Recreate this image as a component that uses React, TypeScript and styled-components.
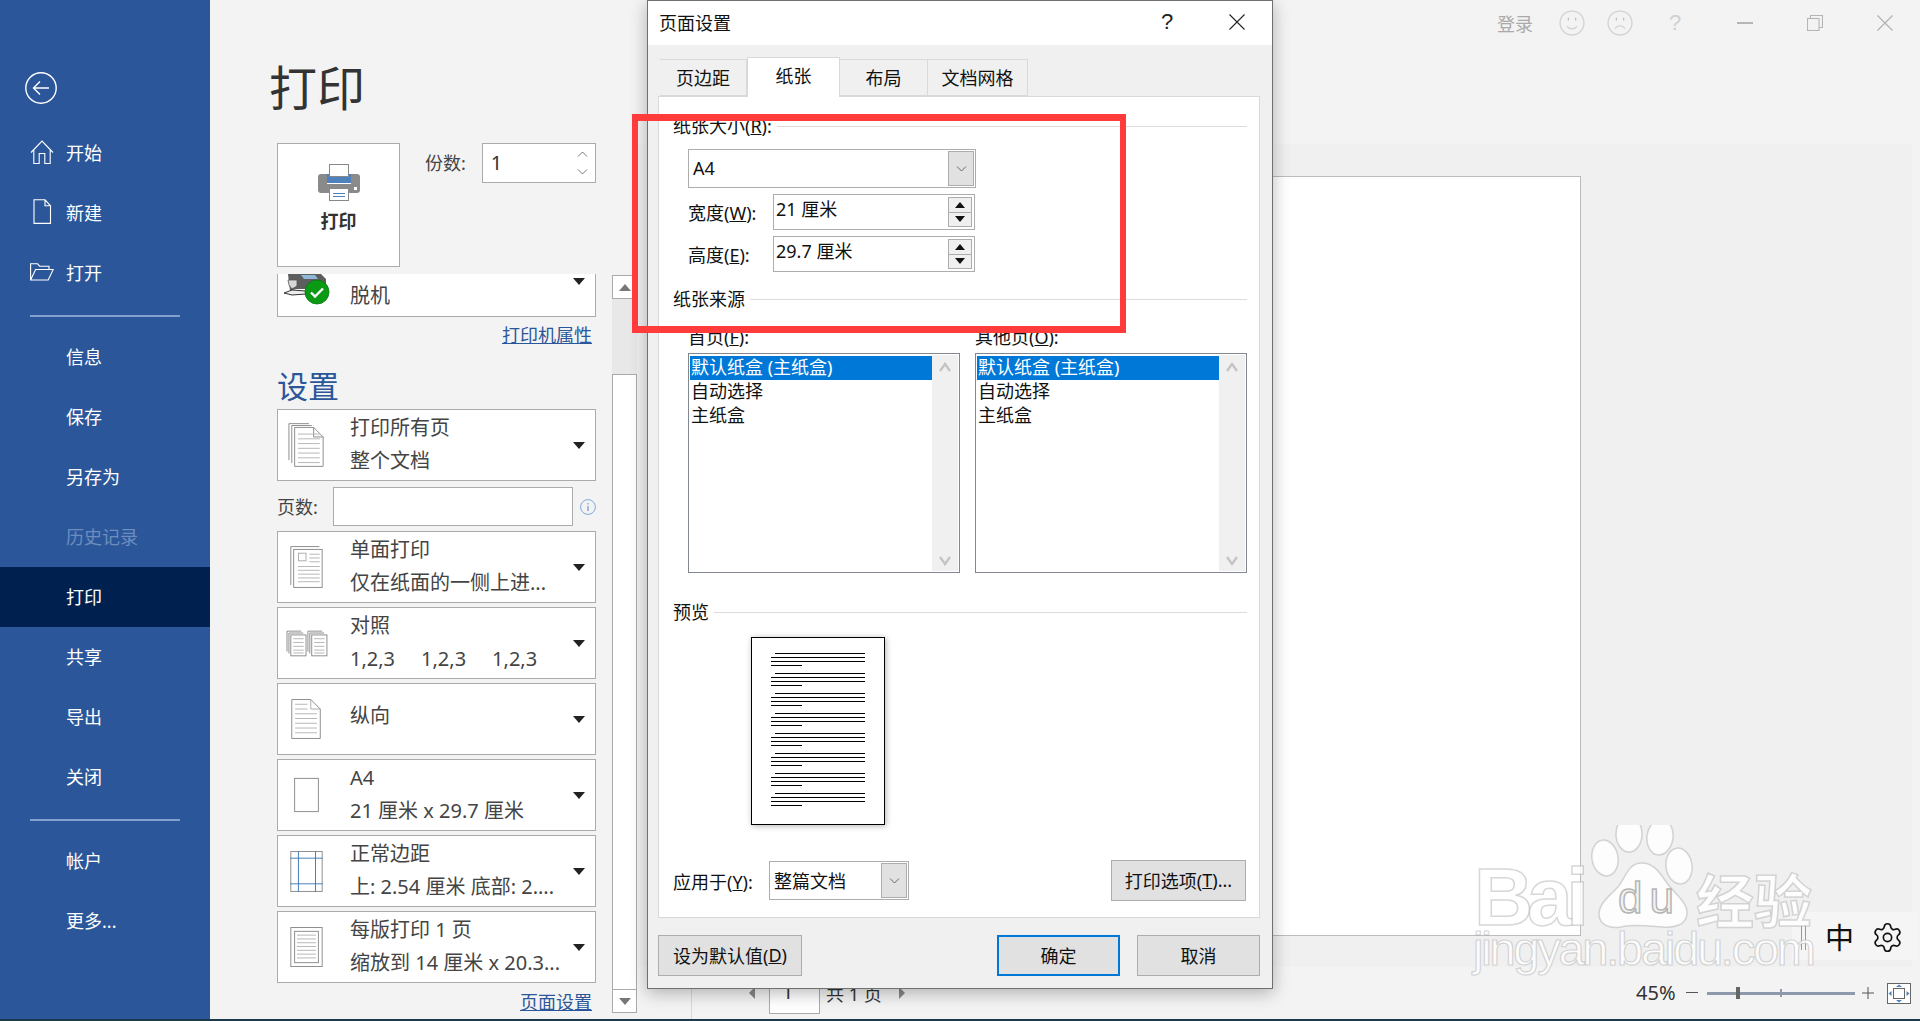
import { ReactNode } from 'react'
import styled, { createGlobalStyle } from 'styled-components'
import { Settings } from 'lucide-react'

const GlobalStyle = createGlobalStyle`
  html, body {
    margin: 0;
    padding: 0;
    overflow: hidden;
    background: #f3f3f3;
  }
  * {
    box-sizing: border-box;
  }
  body {
    font-family: "Noto Sans", "Noto Sans CJK SC", sans-serif;
    font-size: 18px;
  }
`

const Screen = styled.div`
  position: relative;
  width: 1920px;
  height: 1021px;
  display: flex;
  flex-direction: column;
  overflow: hidden;
`

const Body = styled.div`
  flex: 1;
  display: flex;
  min-height: 0;
`

const TaskbarEdge = styled.div`
  height: 2px;
  background: #1d3a4c;
`

/* sidebar */

const Sidebar = styled.nav`
  width: 210px;
  flex-shrink: 0;
  padding-top: 72px;
  background: #2b579a;
  color: #fff;
`

const BackButton = styled.div`
  display: flex;
  margin: 0 0 19px 25px;
  height: 32px;
`

const NavItem = styled.div<{ $active?: boolean; $disabled?: boolean }>`
  height: 60px;
  display: flex;
  align-items: center;
  padding: 0 0 3px 30px;
  font-size: 18px;
  background: ${({ $active }) => ($active ? '#002050' : 'transparent')};
  color: ${({ $disabled }) => ($disabled ? '#6c8dbd' : '#fff')};
`

const NavIcon = styled.span`
  width: 36px;
  display: flex;
  align-items: center;
`

const NavDivider = styled.div<{ $top: number }>`
  height: 2px;
  margin: ${({ $top }) => $top}px 30px 10px;
  background: #82a0cc;
`

/* print settings column */

const PrintPanel = styled.section`
  width: 427px;
  flex-shrink: 0;
  display: flex;
  padding-left: 67px;
  background: #f3f3f3;
`

const PrintColumn = styled.div`
  width: 319px;
  margin-right: 16px;
  display: flex;
  flex-direction: column;
`

const PageTitle = styled.h1`
  margin: 64px 0 31px -8px;
  font-size: 48px;
  line-height: 48px;
  font-weight: 400;
  color: #333;
`

const PrintTop = styled.div`
  display: flex;
  height: 124px;
`

const PrintButton = styled.div`
  width: 123px;
  height: 124px;
  padding-top: 20px;
  display: flex;
  flex-direction: column;
  align-items: center;
  background: #fff;
  border: 1px solid #ababab;
  font-weight: 700;
  font-size: 18px;
  color: #333;
  line-height: 26px;
  gap: 7px;
`

const Copies = styled.div`
  display: flex;
  align-items: center;
  height: 40px;
  margin-left: 25px;
  gap: 16px;
  color: #444;
  line-height: 38px;
`

const CopiesInput = styled.div`
  width: 114px;
  height: 40px;
  display: flex;
  align-items: center;
  justify-content: space-between;
  padding: 0 7px 0 8px;
  background: #fff;
  border: 1px solid #ababab;
  font-size: 20px;
  color: #333;
`

const MiniSpin = styled.div`
  display: flex;
  flex-direction: column;
  gap: 12px;
`

const PrinterBox = styled.div`
  height: 43px;
  margin-top: 7px;
  display: flex;
  background: #fff;
  border: 1px solid #ababab;
  border-top: 0;
  font-size: 20px;
  color: #444;
`

const PrinterIconSlot = styled.div`
  width: 72px;
  padding-left: 6px;
`

const PrinterName = styled.div`
  flex: 1;
  line-height: 44px;
`

const CaretSlot = styled.div<{ $top?: boolean }>`
  width: 32px;
  flex-shrink: 0;
  display: flex;
  justify-content: center;
  align-items: ${({ $top }) => ($top ? 'flex-start' : 'center')};
  padding-top: ${({ $top }) => ($top ? '4px' : '0')};
`

const Caret = styled.div`
  width: 0;
  height: 0;
  border-left: 6px solid transparent;
  border-right: 6px solid transparent;
  border-top: 7px solid #222;
`

const LinkRow = styled.div<{ $height: number; $top: number }>`
  height: ${({ $height }) => $height}px;
  margin-top: ${({ $top }) => $top}px;
  padding: 0 4px 2px 0;
  display: flex;
  justify-content: flex-end;
  align-items: center;
`

const PanelLink = styled.a`
  color: #2b579a;
  text-decoration: underline;
  font-size: 18px;
`

const SettingsHeading = styled.h2`
  margin: 13px 0 1px;
  height: 42px;
  font-size: 31px;
  line-height: 40px;
  font-weight: 400;
  color: #2b579a;
`

const OptionRow = styled.div<{ $gap?: number }>`
  height: 72px;
  margin-top: ${({ $gap }) => $gap ?? 4}px;
  display: flex;
  align-items: center;
  background: #fff;
  border: 1px solid #ababab;
  color: #444;
  font-size: 20px;
`

const OptionIcon = styled.div`
  width: 72px;
  flex-shrink: 0;
  padding-right: 15px;
  display: flex;
  justify-content: center;
`

const OptionText = styled.div<{ $single?: boolean }>`
  flex: 1;
  min-width: 0;
  line-height: 33px;
  white-space: nowrap;
  padding-bottom: ${({ $single }) => ($single ? '8px' : '2px')};
`

const PageRange = styled.div`
  height: 39px;
  margin-top: 6px;
  display: flex;
  align-items: center;
  color: #444;
`

const RangeLabel = styled.div`
  width: 56px;
  padding-bottom: 2px;
`

const RangeInput = styled.div`
  width: 240px;
  height: 39px;
  background: #fff;
  border: 1px solid #ababab;
`

const RangeInfo = styled.div`
  margin-left: 7px;
  display: flex;
`

const ScrollBar = styled.div`
  width: 25px;
  height: 738px;
  margin-top: 275px;
  display: flex;
  flex-direction: column;
  background: #e8e8e8;
`

const ScrollEnd = styled.div`
  height: 24px;
  display: flex;
  align-items: center;
  justify-content: center;
  background: #fff;
  border: 1px solid #ababab;
`

const ScrollTrack = styled.div`
  height: 75px;
`

const ScrollThumb = styled.div`
  flex: 1;
  background: #fff;
  border: 1px solid #ababab;
  border-bottom: 0;
`

const ScrollArrow = styled.div<{ $down?: boolean }>`
  width: 0;
  height: 0;
  border-left: 6px solid transparent;
  border-right: 6px solid transparent;
  ${({ $down }) => ($down ? 'border-top: 7px solid #777;' : 'border-bottom: 7px solid #777;')}
`

/* preview side */

const PreviewColumn = styled.section`
  flex: 1;
  min-width: 0;
  display: flex;
  flex-direction: column;
`

const TitleBar = styled.div`
  height: 46px;
  display: flex;
  align-items: center;
  justify-content: flex-end;
  color: #aaa;
`

const SignIn = styled.span`
  margin-right: 19px;
  font-size: 18px;
`

const FaceCell = styled.div<{ $gap?: number }>`
  width: 40px;
  margin-right: ${({ $gap }) => $gap ?? 0}px;
  display: flex;
  justify-content: center;
`

const WindowCell = styled.div`
  width: 70px;
  display: flex;
  justify-content: center;
  align-items: center;
`

const HelpMark = styled.span`
  font-family: "Liberation Sans", sans-serif;
  font-size: 22px;
  color: #d0d0d0;
`

const TitleBarSpacer = styled.div`
  height: 98px;
`

const PreviewPane = styled.div`
  flex: 1;
  margin-right: 8px;
  padding: 32px 0 0 406px;
  background: #f0f0f0;
`

const PreviewSheet = styled.div`
  width: 538px;
  height: 760px;
  background: #fff;
  border: 1px solid #bcbcbc;
`

const StatusBar = styled.div`
  height: 52px;
  display: flex;
  align-items: center;
  padding: 0 9px 0 54px;
  color: #333;
`

const StatusSeparator = styled.div`
  width: 1px;
  height: 30px;
  margin-top: 22px;
  background: #d9d9d9;
`

const PagerArrow = styled.div<{ $right?: boolean }>`
  width: 0;
  height: 0;
  border-top: 6px solid transparent;
  border-bottom: 6px solid transparent;
  margin-left: ${({ $right }) => ($right ? '17px' : '57px')};
  ${({ $right }) => ($right ? 'border-left: 6px solid #888;' : 'border-right: 6px solid #888;')}
`

const PagerInput = styled.div`
  width: 51px;
  height: 41px;
  margin: 0 6px 0 14px;
  padding: 4px 0 0 12px;
  align-self: flex-end;
  margin-bottom: 5px;
  background: #fff;
  border: 1px solid #ababab;
  font-size: 20px;
`

const ZoomGroup = styled.div`
  margin-left: auto;
  display: flex;
  align-items: center;
`

const ZoomPercent = styled.span`
  width: 50px;
  font-size: 20px;
  line-height: 24px;
`

const ZoomSign = styled.div`
  display: flex;
  width: 14px;
`

const ZoomTrack = styled.div`
  position: relative;
  width: 148px;
  height: 3px;
  margin: 0 7px;
  background: #8e9aab;
`

const ZoomThumb = styled.div`
  position: absolute;
  left: 29px;
  top: -5px;
  width: 4px;
  height: 12px;
  background: #666;
`

const ZoomTick = styled.div`
  position: absolute;
  left: 73px;
  top: -3px;
  width: 2px;
  height: 8px;
  background: #8e9aab;
`

const FitButton = styled.div`
  width: 24px;
  height: 21px;
  margin-left: 11px;
  display: flex;
  background: #fff;
  border: 1px solid #666;
`

/* page setup dialog */

const Dialog = styled.div`
  position: absolute;
  left: 647px;
  top: 0;
  width: 626px;
  height: 989px;
  display: flex;
  flex-direction: column;
  background: #f0f0f0;
  border: 1px solid #707070;
  color: #111;
  box-shadow: 0 4px 16px rgba(0, 0, 0, 0.28);
`

const DialogHead = styled.div`
  height: 44px;
  display: flex;
  align-items: center;
  padding: 0 0 2px 11px;
  background: #fff;
  font-size: 18px;
`

const DialogTitle = styled.span`
  flex: 1;
`

const DialogHeadButton = styled.div`
  width: 70px;
  display: flex;
  justify-content: center;
  align-items: center;
`

const DialogHelp = styled.span`
  font-family: "Liberation Sans", sans-serif;
  font-size: 22px;
  color: #222;
`

const Tabs = styled.div`
  height: 51px;
  padding: 12px 0 0 12px;
  display: flex;
  align-items: flex-end;
`

const Tab = styled.div<{ $active?: boolean; $width: number }>`
  position: relative;
  width: ${({ $width }) => $width}px;
  height: ${({ $active }) => ($active ? '40px' : '37px')};
  margin-bottom: ${({ $active }) => ($active ? '-1px' : '0')};
  padding-bottom: ${({ $active }) => ($active ? '5px' : '2px')};
  display: flex;
  align-items: center;
  justify-content: center;
  background: ${({ $active }) => ($active ? '#fff' : '#f0f0f0')};
  border: 1px solid #d9d9d9;
  border-bottom: ${({ $active }) => ($active ? '0' : '1px solid #d9d9d9')};
  border-left: ${({ $active }) => ($active ? '1px solid #d9d9d9' : '0')};
  z-index: ${({ $active }) => ($active ? 1 : 0)};
  font-size: 18px;
`

const TabPanel = styled.div`
  height: 822px;
  margin: 0 12px 0 10px;
  padding: 17px 12px 0 14px;
  background: #fff;
  border: 1px solid #d9d9d9;
  font-size: 18px;
`

const GroupHeading = styled.div<{ $top?: number }>`
  height: 24px;
  margin-top: ${({ $top }) => $top ?? 0}px;
  display: flex;
  align-items: center;
  gap: 5px;
  line-height: 24px;
  white-space: nowrap;

  &::after {
    content: '';
    flex: 1;
    height: 1px;
    background: #dcdcdc;
  }
`

const ComboBox = styled.div<{ $width: number; $height: number }>`
  width: ${({ $width }) => $width}px;
  height: ${({ $height }) => $height}px;
  display: flex;
  align-items: center;
  padding: 1px;
  background: #fff;
  border: 1px solid #adadad;
`

const ComboValue = styled.div`
  flex: 1;
  padding: 0 0 2px 3px;
  font-size: 18px;
`

const ComboButton = styled.div`
  width: 26px;
  height: 100%;
  display: flex;
  align-items: center;
  justify-content: center;
  background: #e1e1e1;
  border: 1px solid #adadad;
`

const SizeCombo = styled.div`
  margin: 11px 0 0 15px;
`

const SizeRow = styled.div`
  height: 36px;
  margin: 6px 0 0 15px;
  display: flex;
  align-items: center;
`

const SizeLabel = styled.div`
  width: 85px;
  padding-bottom: 1px;
`

const SizeInput = styled.div`
  width: 202px;
  height: 36px;
  display: flex;
  justify-content: space-between;
  padding: 2px 2px 2px 2px;
  background: #fff;
  border: 1px solid #adadad;
  line-height: 24px;
`

const SpinBox = styled.div`
  width: 24px;
  display: flex;
  flex-direction: column;
  border: 1px solid #adadad;
`

const SpinHalf = styled.div<{ $down?: boolean }>`
  flex: 1;
  display: flex;
  align-items: center;
  justify-content: center;
  background: #f0f0f0;
  border-top: ${({ $down }) => ($down ? '1px solid #adadad' : '0')};
`

const SpinArrow = styled.div<{ $down?: boolean }>`
  width: 0;
  height: 0;
  border-left: 5px solid transparent;
  border-right: 5px solid transparent;
  ${({ $down }) => ($down ? 'border-top: 6px solid #111;' : 'border-bottom: 6px solid #111;')}
`

const SourceGrid = styled.div`
  display: grid;
  grid-template-columns: 272px 272px;
  column-gap: 15px;
  margin: 14px 0 0 15px;
`

const SourceCol = styled.div`
  display: flex;
  flex-direction: column;
`

const SourceLabel = styled.div`
  height: 24px;
  line-height: 24px;
  margin-bottom: 4px;
`

const ListBox = styled.div`
  height: 220px;
  display: flex;
  padding: 1px;
  background: #fff;
  border: 1px solid #828790;
`

const ListRows = styled.div`
  flex: 1;
  padding-top: 1px;
`

const ListRow = styled.div<{ $selected?: boolean }>`
  height: 24px;
  padding-left: 1px;
  line-height: 23px;
  white-space: nowrap;
  background: ${({ $selected }) => ($selected ? '#0078d7' : 'transparent')};
  color: ${({ $selected }) => ($selected ? '#fff' : '#111')};
`

const ListScroll = styled.div`
  width: 26px;
  padding: 7px 0 5px;
  display: flex;
  flex-direction: column;
  align-items: center;
  justify-content: space-between;
  background: #f0f0f0;
`

const SamplePage = styled.div`
  width: 134px;
  height: 188px;
  margin: 13px 0 0 78px;
  padding: 15px 19px 0;
  background: #fff;
  border: 1px solid #000;
  box-shadow: 1px 1px 6px rgba(0, 0, 0, 0.3);
`

const SampleGroup = styled.div`
  height: 20px;
  display: flex;
  flex-direction: column;
  gap: 3px;
`

const SampleLine = styled.div<{ $indent?: boolean; $short?: boolean }>`
  height: 1px;
  background: #000;
  margin-left: ${({ $indent }) => ($indent ? '4px' : '0')};
  width: ${({ $indent, $short }) => ($short ? '31px' : $indent ? '90px' : '94px')};
`

const ApplyRow = styled.div`
  height: 41px;
  margin-top: 35px;
  padding-right: 1px;
  display: flex;
  align-items: center;
`

const ApplyLabel = styled.div`
  width: 96px;
`

const DialogButton = styled.div<{ $width: number; $primary?: boolean }>`
  width: ${({ $width }) => $width}px;
  height: 41px;
  padding-bottom: 2px;
  display: flex;
  align-items: center;
  justify-content: center;
  background: #e1e1e1;
  border: ${({ $primary }) => ($primary ? '2px solid #0078d7' : '1px solid #adadad')};
  font-size: 18px;
  white-space: nowrap;
`

const ApplyButton = styled(DialogButton)`
  margin-left: auto;
`

const DialogFooter = styled.div`
  margin: 17px 12px 0 10px;
  display: flex;
  gap: 17px;
`

const FooterSpacer = styled.div`
  flex: 1;
`

/* things lying over the window */

const RedFrame = styled.div`
  position: absolute;
  left: 632px;
  top: 114px;
  width: 494px;
  height: 219px;
  border: solid #ff3b3b;
  border-width: 7px 6px;
`

const ImeBar = styled.div`
  position: absolute;
  left: 1792px;
  top: 912px;
  width: 126px;
  height: 48px;
  display: flex;
  align-items: center;
  padding: 3px 0 0 9px;
  background: #f5f5f5;
  color: #111;
`

const ImeHandle = styled.div`
  width: 5px;
  height: 25px;
  border: solid #999;
  border-width: 0 1px;
`

const ImeLang = styled.span`
  width: 29px;
  margin: 0 17px 0 19px;
  font-size: 29px;
  line-height: 30px;
`

const Watermark = styled.svg`
  position: absolute;
  left: 1470px;
  top: 825px;
`

const PreviewDoc = () => (
  <>
    {Array.from({ length: 8 }).map((_, i) => (
      <SampleGroup key={i}>
        <SampleLine $indent />
        <SampleLine />
        <SampleLine />
        <SampleLine $short />
      </SampleGroup>
    ))}
  </>
)

/* icons */

const HomeIcon = () => (
  <svg width="24" height="24" viewBox="0 0 24 24" fill="none" stroke="#fff" strokeWidth="1.1">
    <path d="M1 12.5 12 1l11 11.5M3.8 9.7V23.5h5.4V13.5h5.6v10h5.4V9.7" />
  </svg>
)

const NewIcon = () => (
  <svg width="24" height="25" viewBox="0 0 24 25" fill="none" stroke="#fff" strokeWidth="1.1">
    <path d="M4 .8h11l5.5 6v17.6H4zM15 .8v6h5.5" />
  </svg>
)

const OpenIcon = () => (
  <svg width="24" height="18" viewBox="0 0 24 18" fill="none" stroke="#fff" strokeWidth="1.1">
    <path d="M.6 17V.8h7l2 2.4h9.4v3.3M.6 17h17.6l5-10.5H5.6L.6 17z" />
  </svg>
)

const BackIcon = () => (
  <svg width="32" height="32" viewBox="0 0 32 32" fill="none" stroke="#fff" strokeWidth="1.4">
    <circle cx="16" cy="16" r="15.2" />
    <path d="M24 16H9M15 9.5 8.5 16l6.5 6.5" />
  </svg>
)

const BigPrinter = () => (
  <svg width="42" height="37" viewBox="0 0 42 37">
    <rect x="0" y="10" width="42" height="19" rx="3" fill="#8a8a8a" />
    <rect x="9" y="10" width="24" height="9" fill="#4f81bd" />
    <rect x="9" y="19" width="24" height="1" fill="#fff" />
    <rect x="11.5" y="0.5" width="19" height="12" fill="#fff" stroke="#888" />
    <rect x="11.5" y="24.5" width="19" height="12" fill="#fff" stroke="#888" />
    <path d="M15 29.5h12M15 32.5h12" stroke="#4f81bd" />
    <rect x="36" y="23" width="3" height="3" fill="#fff" />
  </svg>
)

const OfflinePrinter = () => (
  <svg width="48" height="32" viewBox="0 0 48 32">
    <path d="M4 0h33l5 5v10H12l-6 2z" fill="#5d5d5d" />
    <path d="M17 1h14l3 4H20z" fill="#8fb7d8" />
    <path d="M4 6h9v6l-5 3-3-4z" fill="#d8d8d8" stroke="#555" strokeWidth=".8" />
    <path d="M0 19l8-3 14 1v3l-14 1z" fill="#eee" stroke="#333" strokeWidth="1" />
    <circle cx="33" cy="18" r="12" fill="#0a9a14" />
    <circle cx="33" cy="18" r="12" fill="none" stroke="#08780f" strokeWidth=".8" />
    <path d="M27 18.5l4 4 8-8" fill="none" stroke="#fff" strokeWidth="2.4" />
  </svg>
)

const lineSet = (ys: number[], x1: number, x2: number) => (
  <path d={ys.map((y) => `M${x1} ${y}.5H${x2}`).join('')} stroke="#b4b4b4" />
)

const IconFrame = ({ children }: { children: ReactNode }) => (
  <svg width="60" height="60" viewBox="0 0 60 60" fill="none" stroke="#8a8a8a">
    {children}
  </svg>
)

const AllPagesIcon = () => (
  <IconFrame>
    <path d="M11.5 46V7.5h21M14.5 49V9.5h21" />
    <path d="M17.5 11.5h20l10 10v31h-30z" fill="#fff" />
    <path d="M37.5 11.5v10h10" />
    {lineSet([18, 23, 28, 33, 38, 43, 48], 21, 44)}
  </IconFrame>
)

const OneSidedIcon = () => (
  <IconFrame>
    <path d="M13.5 49V8.5h30" />
    <rect x="16.5" y="11.5" width="30" height="40" fill="#fff" />
    <rect x="21.5" y="15.5" width="8" height="8" stroke="#aaa" />
    {lineSet([16, 20, 24], 33, 44)}
    {lineSet([29, 33, 37, 41, 45], 21, 44)}
  </IconFrame>
)

const CollatedIcon = () => (
  <IconFrame>
    <path d="M9.5 39V17.5h15M11.5 41V19.5h15M31.5 39V17.5h15M33.5 41V19.5h15" />
    <rect x="13.5" y="21.5" width="16" height="22" fill="#fff" />
    <rect x="35.5" y="21.5" width="16" height="22" fill="#fff" />
    {lineSet([25, 29, 33, 37, 40], 16, 27)}
    {lineSet([25, 29, 33, 37, 40], 38, 49)}
  </IconFrame>
)

const PortraitIcon = () => (
  <IconFrame>
    <path d="M14.5 9.5h20l10 10v31h-30z" />
    <path d="M34.5 9.5v10h10" stroke="#aaa" />
    {lineSet([14, 19], 18, 31)}
    {lineSet([24, 29, 34, 39, 44], 18, 41)}
  </IconFrame>
)

const PaperIcon = () => (
  <IconFrame>
    <rect x="17.5" y="12.5" width="25" height="35" />
  </IconFrame>
)

const MarginsIcon = () => (
  <IconFrame>
    <rect x="13.5" y="9.5" width="33" height="42" />
    <path d="M21.5 9v43M39.5 9v43M13 16.5h34M13 43.5h34" stroke="#3f78b8" />
  </IconFrame>
)

const ScaleIcon = () => (
  <IconFrame>
    <rect x="13.5" y="9.5" width="33" height="41" />
    <rect x="17.5" y="13.5" width="25" height="33" />
    {lineSet([17, 21, 25, 29, 33, 37, 41], 20, 40)}
  </IconFrame>
)

const ThinChevron = ({ down, color = '#777' }: { down?: boolean; color?: string }) => (
  <svg width="11" height="6" viewBox="0 0 11 6" fill="none" stroke={color}>
    <path d={down ? 'M1 .5l4.5 4.5L10 .5' : 'M1 5.5 5.5 1 10 5.5'} />
  </svg>
)

const ThickChevron = ({ down }: { down?: boolean }) => (
  <svg width="12" height="10" viewBox="0 0 12 10" fill="none" stroke="#c4c4c4" strokeWidth="2.4">
    <path d={down ? 'M1 1l5 7 5-7' : 'M1 9l5-7 5 7'} />
  </svg>
)

const Face = ({ sad }: { sad?: boolean }) => (
  <svg width="26" height="26" viewBox="0 0 25 25" fill="none" stroke="#d2d2d2" strokeWidth="1.2">
    <circle cx="12.5" cy="12.5" r="11.5" />
    <path d="M9 7.5v2.5M16 7.5v2.5" stroke="#bbb" />
    <path d={sad ? 'M7.5 18c2.5-3.5 7.5-3.5 10 0' : 'M7.5 15.5c2.5 3.5 7.5 3.5 10 0'} />
  </svg>
)

const InfoIcon = () => (
  <svg width="16" height="16" viewBox="0 0 16 16" fill="none" stroke="#7fa8d9">
    <circle cx="8" cy="8" r="7.4" />
    <path d="M8 7v5M8 4v1.5" stroke="#4f81bd" />
  </svg>
)

const CloseGlyph = ({ color }: { color: string }) => (
  <svg width="16" height="16" viewBox="0 0 16 16" fill="none" stroke={color} strokeWidth="1.1">
    <path d="M.5.5l15 15M15.5.5l-15 15" />
  </svg>
)

const MinimizeGlyph = () => (
  <svg width="16" height="2" viewBox="0 0 16 2">
    <rect width="16" height="2" fill="#b5b5b5" />
  </svg>
)

const RestoreGlyph = () => (
  <svg width="16" height="16" viewBox="0 0 16 16" fill="none" stroke="#b5b5b5" strokeWidth="1.1">
    <rect x=".5" y="3.5" width="11.5" height="12" />
    <path d="M3.5 3V.5h12v12H12" />
  </svg>
)

const MinusGlyph = () => (
  <svg width="12" height="2" viewBox="0 0 12 2">
    <rect width="12" height="1" fill="#555" />
  </svg>
)

const PlusGlyph = () => (
  <svg width="12" height="12" viewBox="0 0 12 12" stroke="#555">
    <path d="M0 6h12M6 0v12" />
  </svg>
)

const FitGlyph = () => (
  <svg width="22" height="19" viewBox="0 0 22 19">
    <rect x="5.5" y="4.5" width="11" height="10" fill="#fff" stroke="#666" />
    <path d="M11 .5l3 2.5H8zM11 18.5l3-2.5H8zM.5 9.5l3-2.5v5zM21.5 9.5l-3-2.5v5z" fill="#4f81bd" />
  </svg>
)

const options = [
  { icon: <OneSidedIcon />, top: '单面打印', bottom: '仅在纸面的一侧上进...' },
  { icon: <CollatedIcon />, top: '对照', bottom: '1,2,3\u00a0\u00a0\u00a0\u00a0\u00a01,2,3\u00a0\u00a0\u00a0\u00a0\u00a01,2,3' },
  { icon: <PortraitIcon />, top: '纵向' },
  { icon: <PaperIcon />, top: 'A4', bottom: '21 厘米 x 29.7 厘米' },
  { icon: <MarginsIcon />, top: '正常边距', bottom: '上: 2.54 厘米 底部: 2....' },
  { icon: <ScaleIcon />, top: '每版打印 1 页', bottom: '缩放到 14 厘米 x 20.3...' },
]

const Spinner = () => (
  <SpinBox>
    <SpinHalf>
      <SpinArrow />
    </SpinHalf>
    <SpinHalf $down>
      <SpinArrow $down />
    </SpinHalf>
  </SpinBox>
)

const SourceList = ({ label }: { label: ReactNode }) => (
  <SourceCol>
    <SourceLabel>{label}</SourceLabel>
    <ListBox>
      <ListRows>
        <ListRow $selected>默认纸盒 (主纸盒)</ListRow>
        <ListRow>自动选择</ListRow>
        <ListRow>主纸盒</ListRow>
      </ListRows>
      <ListScroll>
        <ThickChevron />
        <ThickChevron down />
      </ListScroll>
    </ListBox>
  </SourceCol>
)

export default function App() {
  return (
    <Screen>
      <GlobalStyle />
      <Body>
        <Sidebar>
          <BackButton>
            <BackIcon />
          </BackButton>
          <NavItem>
            <NavIcon>
              <HomeIcon />
            </NavIcon>
            开始
          </NavItem>
          <NavItem>
            <NavIcon>
              <NewIcon />
            </NavIcon>
            新建
          </NavItem>
          <NavItem>
            <NavIcon>
              <OpenIcon />
            </NavIcon>
            打开
          </NavItem>
          <NavDivider $top={12} />
          <NavItem>
            <NavIcon />
            信息
          </NavItem>
          <NavItem>
            <NavIcon />
            保存
          </NavItem>
          <NavItem>
            <NavIcon />
            另存为
          </NavItem>
          <NavItem $disabled>
            <NavIcon />
            历史记录
          </NavItem>
          <NavItem $active>
            <NavIcon />
            打印
          </NavItem>
          <NavItem>
            <NavIcon />
            共享
          </NavItem>
          <NavItem>
            <NavIcon />
            导出
          </NavItem>
          <NavItem>
            <NavIcon />
            关闭
          </NavItem>
          <NavDivider $top={12} />
          <NavItem>
            <NavIcon />
            帐户
          </NavItem>
          <NavItem>
            <NavIcon />
            更多...
          </NavItem>
        </Sidebar>

        <PrintPanel>
          <PrintColumn>
            <PageTitle>打印</PageTitle>
            <PrintTop>
              <PrintButton>
                <BigPrinter />
                打印
              </PrintButton>
              <Copies>
                份数:
                <CopiesInput>
                  1
                  <MiniSpin>
                    <ThinChevron />
                    <ThinChevron down />
                  </MiniSpin>
                </CopiesInput>
              </Copies>
            </PrintTop>
            <PrinterBox>
              <PrinterIconSlot>
                <OfflinePrinter />
              </PrinterIconSlot>
              <PrinterName>脱机</PrinterName>
              <CaretSlot $top>
                <Caret />
              </CaretSlot>
            </PrinterBox>
            <LinkRow $height={36} $top={0}>
              <PanelLink>打印机属性</PanelLink>
            </LinkRow>
            <SettingsHeading>设置</SettingsHeading>
            <OptionRow $gap={0}>
              <OptionIcon>
                <AllPagesIcon />
              </OptionIcon>
              <OptionText>
                打印所有页
                <br />
                整个文档
              </OptionText>
              <CaretSlot>
                <Caret />
              </CaretSlot>
            </OptionRow>
            <PageRange>
              <RangeLabel>页数:</RangeLabel>
              <RangeInput />
              <RangeInfo>
                <InfoIcon />
              </RangeInfo>
            </PageRange>
            {options.map((o, i) => (
              <OptionRow key={o.top} $gap={i === 0 ? 5 : 4}>
                <OptionIcon>{o.icon}</OptionIcon>
                <OptionText $single={!o.bottom}>
                  {o.top}
                  {o.bottom && <br />}
                  {o.bottom}
                </OptionText>
                <CaretSlot>
                  <Caret />
                </CaretSlot>
              </OptionRow>
            ))}
            <LinkRow $height={34} $top={2}>
              <PanelLink>页面设置</PanelLink>
            </LinkRow>
          </PrintColumn>
          <ScrollBar>
            <ScrollEnd>
              <ScrollArrow />
            </ScrollEnd>
            <ScrollTrack />
            <ScrollThumb />
            <ScrollEnd>
              <ScrollArrow $down />
            </ScrollEnd>
          </ScrollBar>
        </PrintPanel>

        <PreviewColumn>
          <TitleBar>
            <SignIn>登录</SignIn>
            <FaceCell $gap={8}>
              <Face />
            </FaceCell>
            <FaceCell>
              <Face sad />
            </FaceCell>
            <WindowCell>
              <HelpMark>?</HelpMark>
            </WindowCell>
            <WindowCell>
              <MinimizeGlyph />
            </WindowCell>
            <WindowCell>
              <RestoreGlyph />
            </WindowCell>
            <WindowCell>
              <CloseGlyph color="#b0b0b0" />
            </WindowCell>
          </TitleBar>
          <TitleBarSpacer />
          <PreviewPane>
            <PreviewSheet />
          </PreviewPane>
          <StatusBar>
            <StatusSeparator />
            <PagerArrow />
            <PagerInput>1</PagerInput>
            共 1 页
            <PagerArrow $right />
            <ZoomGroup>
              <ZoomPercent>45%</ZoomPercent>
              <ZoomSign>
                <MinusGlyph />
              </ZoomSign>
              <ZoomTrack>
                <ZoomThumb />
                <ZoomTick />
              </ZoomTrack>
              <ZoomSign>
                <PlusGlyph />
              </ZoomSign>
              <FitButton>
                <FitGlyph />
              </FitButton>
            </ZoomGroup>
          </StatusBar>
        </PreviewColumn>
      </Body>
      <TaskbarEdge />

      <Dialog>
        <DialogHead>
          <DialogTitle>页面设置</DialogTitle>
          <DialogHeadButton>
            <DialogHelp>?</DialogHelp>
          </DialogHeadButton>
          <DialogHeadButton>
            <CloseGlyph color="#222" />
          </DialogHeadButton>
        </DialogHead>
        <Tabs>
          <Tab $width={87}>页边距</Tab>
          <Tab $width={93} $active>
            纸张
          </Tab>
          <Tab $width={88}>布局</Tab>
          <Tab $width={100}>文档网格</Tab>
        </Tabs>
        <TabPanel>
          <GroupHeading>
            <span>
              纸张大小(<u>R</u>):
            </span>
          </GroupHeading>
          <SizeCombo>
            <ComboBox $width={288} $height={39}>
              <ComboValue>A4</ComboValue>
              <ComboButton>
                <ThinChevron down color="#666" />
              </ComboButton>
            </ComboBox>
          </SizeCombo>
          <SizeRow>
            <SizeLabel>
              宽度(<u>W</u>):
            </SizeLabel>
            <SizeInput>
              21 厘米
              <Spinner />
            </SizeInput>
          </SizeRow>
          <SizeRow>
            <SizeLabel>
              高度(<u>E</u>):
            </SizeLabel>
            <SizeInput>
              29.7 厘米
              <Spinner />
            </SizeInput>
          </SizeRow>
          <GroupHeading $top={15}>
            <span>纸张来源</span>
          </GroupHeading>
          <SourceGrid>
            <SourceList
              label={
                <>
                  首页(<u>F</u>):
                </>
              }
            />
            <SourceList
              label={
                <>
                  其他页(<u>O</u>):
                </>
              }
            />
          </SourceGrid>
          <GroupHeading $top={27}>
            <span>预览</span>
          </GroupHeading>
          <SamplePage>
            <PreviewDoc />
          </SamplePage>
          <ApplyRow>
            <ApplyLabel>
              应用于(<u>Y</u>):
            </ApplyLabel>
            <ComboBox $width={140} $height={39}>
              <ComboValue>整篇文档</ComboValue>
              <ComboButton>
                <ThinChevron down color="#666" />
              </ComboButton>
            </ComboBox>
            <ApplyButton $width={135}>
              打印选项(<u>T</u>)...
            </ApplyButton>
          </ApplyRow>
        </TabPanel>
        <DialogFooter>
          <DialogButton $width={144}>
            设为默认值(<u>D</u>)
          </DialogButton>
          <FooterSpacer />
          <DialogButton $width={123} $primary>
            确定
          </DialogButton>
          <DialogButton $width={123}>取消</DialogButton>
        </DialogFooter>
      </Dialog>

      <RedFrame />

      <ImeBar>
        <ImeHandle />
        <ImeLang>中</ImeLang>
        <Settings size={33} strokeWidth={1.2} color="#111" />
      </ImeBar>

      <Watermark width="350" height="160" viewBox="0 0 350 160" fill="rgba(255,255,255,.82)" stroke="rgba(175,175,175,.5)" strokeWidth="1.5">
        <ellipse cx="159" cy="9" rx="13" ry="18" />
        <ellipse cx="190" cy="12" rx="13" ry="18" transform="rotate(8 190 12)" />
        <ellipse cx="135" cy="33" rx="13" ry="18" transform="rotate(-10 135 33)" />
        <ellipse cx="209" cy="41" rx="13" ry="18" transform="rotate(-8 209 41)" />
        <path d="M172 38c14 0 20 14 28 24 10 11 18 18 17 27-1 11-13 14-24 13-14-1-28-3-42 0-11 2-22-2-22-13 0-10 10-18 19-27 8-10 10-24 24-24z" />
        <text x="148" y="88" fontFamily="'Liberation Sans', sans-serif" fontSize="44" fill="rgba(240,240,240,.8)" stroke="rgba(150,150,150,.7)" textLength="56">
          du
        </text>
        <text x="4" y="100" fontFamily="'Liberation Sans', sans-serif" fontWeight="700" fontSize="82" textLength="115">
          Bai
        </text>
        <text x="226" y="98" fontFamily="'Noto Sans CJK SC', sans-serif" fontWeight="700" fontSize="58" textLength="116">
          经验
        </text>
        <text x="3" y="140" fontFamily="'Liberation Sans', sans-serif" fontSize="47" textLength="343" strokeWidth="1.2">
          jingyan.baidu.com
        </text>
      </Watermark>
    </Screen>
  )
}
